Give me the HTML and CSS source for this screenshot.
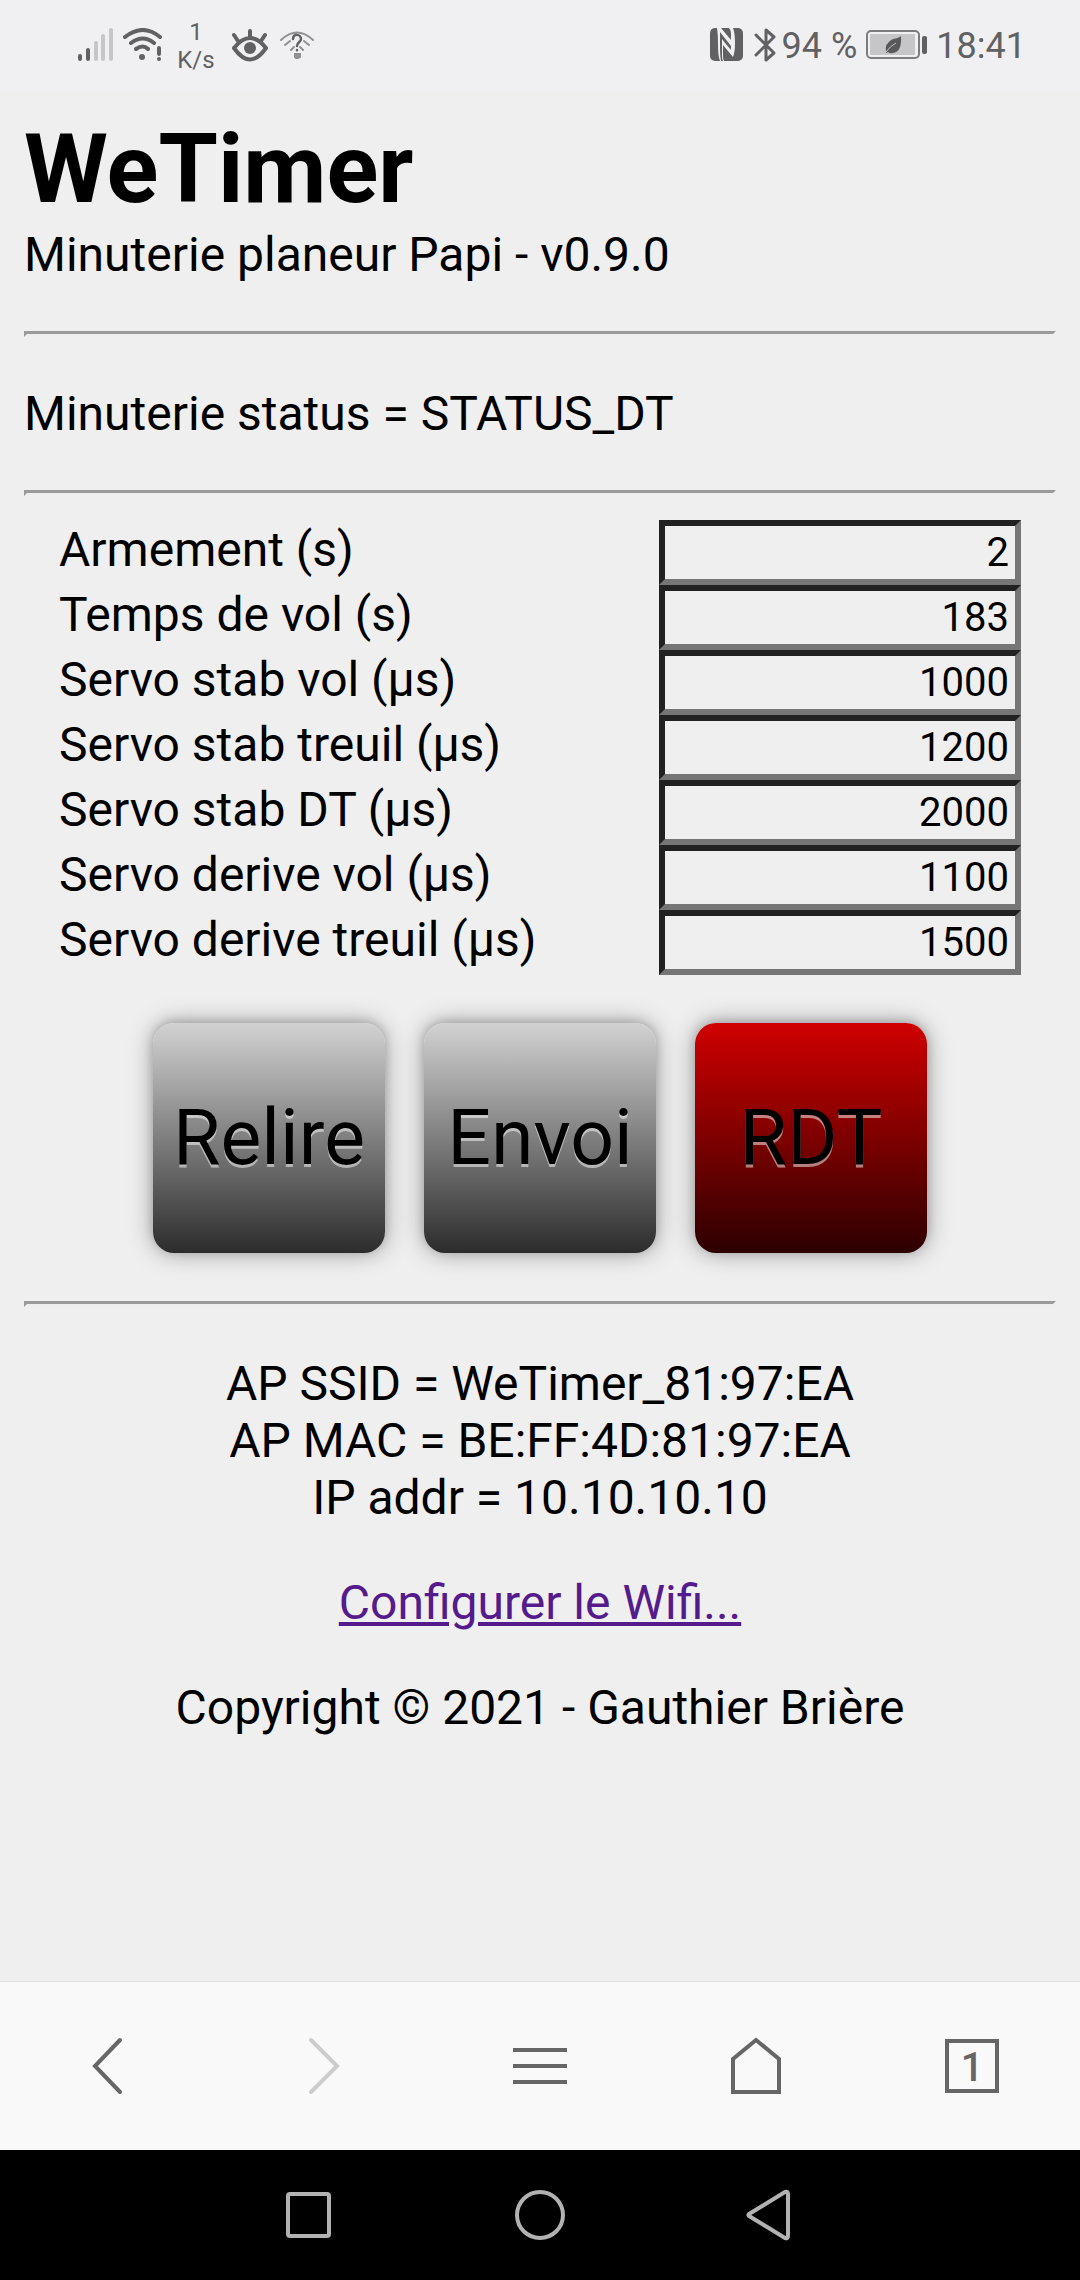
FILE: index.html
```html
<!DOCTYPE html>
<html lang="fr">
<head>
<meta charset="utf-8">
<meta name="viewport" content="width=device-width, initial-scale=1">
<title>WeTimer</title>
<link rel="stylesheet" href="styles.css">
</head>
<body>
<div class="status-bar">
  <div class="status-left">
    <svg width="36" height="34" viewBox="0 0 36 34" stroke-width="4" stroke-linecap="round" stroke="#616163"><path d="M2 28v3M10 22v9"/><path stroke="#c6c6c8" d="M18 15v16M25 8v23M33 2v29"/></svg>
    <svg class="icon-wifi" width="40" height="34" viewBox="0 0 40 34" fill="none" stroke="#616163" stroke-width="4" stroke-linecap="round"><path d="M2 9Q20-5 37 9M8 15Q20 6 31 15M13 21Q20 16 25 21M36 20v6"/><circle cx="19" cy="29" r="3" fill="#616163" stroke="none"/><circle cx="36" cy="31" r="2" fill="#616163" stroke="none"/></svg>
    <div class="net-speed"><span>1</span><span>K/s</span></div>
    <svg class="icon-eye" width="36" height="34" viewBox="0 0 36 34" fill="none" stroke="#616163" stroke-width="4" stroke-linecap="round"><path d="M2 20Q18 0 34 20Q18 43 2 20ZM18 3v6M2 7l4 6M33 7l-4 6" stroke-linejoin="round"/><circle cx="18" cy="20" r="6" fill="#616163" stroke="none"/></svg>
    <svg class="icon-hotspot" width="34" height="34" viewBox="0 0 34 34" fill="none" stroke="#919193" stroke-width="2" stroke-linecap="round"><path d="M1 12Q17-3 33 12M5 17l5-4M29 17l-5-4M11 22l3-3M23 22l-3-3"/><path stroke="#616163" stroke-width="2.5" d="M13 11C13 5 21 6 21 11C21 14 17 14 17 18M17 22v.2"/><path fill="#919193" d="M15 26h5v3l-2 1h-2l-1-1z"/></svg>
  </div>
  <div class="status-right">
    <svg width="33" height="34" viewBox="0 0 33 34"><rect width="33" height="33" rx="5" fill="#616163"/><path fill="#f0f0f2" d="M7 0H11L21 12V5Q21 2 19 0H23Q25 5 25 16Q25 24 23 29L13 17V28Q13 31 14 33H10Q8 28 8 17Q8 6 7 0Z"/><path fill="#616163" d="M10 4L21 18V22L15 15L12 11V28Q12 31 13 33H11Q10 28 10 17Z"/></svg>
    <svg class="icon-bt" width="22" height="36" viewBox="0 0 22 36" fill="none" stroke="#616163" stroke-width="3" stroke-linecap="round" stroke-linejoin="round"><path d="M2 8L20 26L12 33V3L20 10L2 28"/></svg>
    <span class="battery-level">94 %</span>
    <svg class="icon-battery" width="61" height="30" viewBox="0 0 61 30"><rect x="1" y="1" width="52" height="27" rx="4" fill="none" stroke="#7c7c7e" stroke-width="2"/><rect x="4" y="4" width="45" height="21" rx="1" fill="#c6c6c8"/><path d="M35 6Q36 22 27 23Q24 24 22 22L20 23Q18 13 27 9Q33 8 35 6Z" fill="#59595b"/><path d="M20 22Q24 16 30 13" stroke="#c6c6c8" fill="none"/><rect x="56" y="6" width="5" height="18" rx="2" fill="#616163"/></svg>
    <span class="clock">18:41</span>
  </div>
</div>

<main class="page">
  <h1>WeTimer</h1>
  <p>Minuterie planeur Papi - v0.9.0</p>
  <hr>
  <p>Minuterie status = STATUS_DT</p>
  <hr>
  <form class="settings">
    <div class="fields">
      <div class="field"><label for="arm">Armement (s)</label><input id="arm" type="text" inputmode="numeric" value="2"></div>
      <div class="field"><label for="vol">Temps de vol (s)</label><input id="vol" type="text" inputmode="numeric" value="183"></div>
      <div class="field"><label for="stab-vol">Servo stab vol (µs)</label><input id="stab-vol" type="text" inputmode="numeric" value="1000"></div>
      <div class="field"><label for="stab-treuil">Servo stab treuil (µs)</label><input id="stab-treuil" type="text" inputmode="numeric" value="1200"></div>
      <div class="field"><label for="stab-dt">Servo stab DT (µs)</label><input id="stab-dt" type="text" inputmode="numeric" value="2000"></div>
      <div class="field"><label for="derive-vol">Servo derive vol (µs)</label><input id="derive-vol" type="text" inputmode="numeric" value="1100"></div>
      <div class="field"><label for="derive-treuil">Servo derive treuil (µs)</label><input id="derive-treuil" type="text" inputmode="numeric" value="1500"></div>
    </div>
    <div class="actions">
      <button class="action" type="button">Relire</button>
      <button class="action" type="button">Envoi</button>
      <button class="action action-red" type="button">RDT</button>
    </div>
  </form>
  <hr>
  <footer class="info">
    <p>AP SSID = WeTimer_81:97:EA<br>AP MAC = BE:FF:4D:81:97:EA<br>IP addr = 10.10.10.10</p>
    <p><a href="#wifi">Configurer le Wifi...</a></p>
    <p>Copyright © 2021 - Gauthier Brière</p>
  </footer>
</main>

<nav class="browser-bar">
  <button type="button" aria-label="Retour"><svg width="56" height="58" viewBox="0 0 56 58"><path d="M40 3L15 29L40 55" stroke-linecap="round"/></svg></button>
  <button class="disabled" type="button" aria-label="Suivant"><svg width="56" height="58" viewBox="0 0 56 58"><path d="M15 3L41 29L15 55" stroke-linecap="round"/></svg></button>
  <button type="button" aria-label="Menu"><svg width="56" height="58" viewBox="0 0 56 58"><path d="M1 13H55M1 29H55M1 45H55"/></svg></button>
  <button type="button" aria-label="Accueil"><svg width="56" height="58" viewBox="0 0 56 58"><path d="M5 55V22L28 3L51 22V55Z"/></svg></button>
  <button type="button" aria-label="Onglets"><span class="tab-count">1</span></button>
</nav>
<nav class="system-bar">
  <button type="button" aria-label="Applications"><svg width="52" height="52" viewBox="0 0 52 52"><rect x="5" y="5" width="41" height="42" rx="2"/></svg></button>
  <button type="button" aria-label="Écran d'accueil"><svg width="52" height="52" viewBox="0 0 52 52"><circle cx="26" cy="26" r="23"/></svg></button>
  <button type="button" aria-label="Précédent"><svg width="52" height="52" viewBox="0 0 52 52"><path d="M4 25Q3 26 4 27L40 49Q43 50 43 47V5Q43 2 40 3Z" stroke-linejoin="round"/></svg></button>
</nav>
</body>
</html>
```
FILE: styles.css
```css
* { box-sizing: border-box; }

body {
  margin: 0;
  min-height: 100vh;
  display: flex;
  flex-direction: column;
  background: #efefef;
  color: #000;
  font-family: Roboto, "Noto Sans", sans-serif;
  font-size: 48px;
  line-height: 57px;
}

button { font-family: inherit; border: 0; padding: 0; }
svg { display: block; flex: none; }

/* Phone status bar */
.status-bar {
  height: 90px;
  padding: 0 54px 0 78px;
  display: flex;
  justify-content: space-between;
  align-items: center;
  background: #f0f0f2;
  color: #616163;
  font-size: 36px;
}
.status-left, .status-right { display: flex; align-items: center; }
.icon-wifi { margin-left: 9px; }
.net-speed {
  display: flex;
  flex-direction: column;
  width: 40px;
  margin: 2px 16px 0 13px;
  align-items: center;
  font-size: 24px;
  line-height: 28px;
}
.icon-hotspot { margin-left: 12px; }
.icon-bt { margin-left: 11px; }
.battery-level, .clock { padding-top: 3px; white-space: nowrap; }
.battery-level { margin-left: 6px; }
.icon-battery { margin-left: 9px; }
.clock { margin-left: 9px; }

/* Timer page */
.page { flex: 1; padding: 24px 24px 48px; }
h1 { margin: 0 0 2px; font-size: 96px; line-height: 110px; font-weight: 700; }
p { margin: 0 0 48px; }
hr {
  margin: 48px 0;
  height: 6px;
  border: 3px solid;
  border-color: #9a9a9a #eee #eee #9a9a9a;
}
.fields { margin-top: -24px; padding: 0 35px; }
.field { display: flex; justify-content: space-between; align-items: center; height: 65px; }
.field label { padding-bottom: 6px; }
.field input {
  width: 362px;
  height: 65px;
  padding: 3px 6px;
  border: 6px solid;
  border-color: #212121 #767676 #767676 #212121;
  border-radius: 0;
  background: #efefef;
  color: #000;
  font-family: inherit;
  font-size: 40px;
  text-align: right;
}
.actions { display: flex; justify-content: center; gap: 39px; margin-top: 48px; }
.action {
  width: 232px;
  height: 230px;
  border-radius: 21px;
  background: linear-gradient(#d2d2d2, #2c2c2c);
  box-shadow: 0 0 24px rgba(0, 0, 0, 0.35), 0 -2px 10px rgba(0, 0, 0, 0.15);
  color: #000;
  font-size: 77px;
  text-shadow: 0 3px rgba(255, 255, 255, 0.5);
}
.action-red { background: linear-gradient(#d00000, #2c0000); }
.info { text-align: center; }
.info a { color: #551a8b; }

/* Browser toolbar */
.browser-bar {
  display: grid;
  grid-template-columns: repeat(5, 1fr);
  height: 169px;
  border-top: 1px solid #e0e0e0;
  background: #f9f9f9;
}
.browser-bar button {
  display: flex;
  align-items: center;
  justify-content: center;
  background: none;
  color: #666;
}
.browser-bar .disabled { color: #ccc; }
.browser-bar svg { fill: none; stroke: currentColor; stroke-width: 4px; }
.tab-count {
  width: 54px;
  height: 54px;
  border: 4px solid;
  font-size: 40px;
  line-height: 50px;
  font-weight: 500;
}

/* Android navigation */
.system-bar {
  display: grid;
  grid-template-columns: repeat(3, 231px);
  justify-content: center;
  height: 130px;
  background: #000;
}
.system-bar button {
  display: flex;
  align-items: center;
  justify-content: center;
  background: none;
}
.system-bar svg { fill: none; stroke: #b2b2b2; stroke-width: 4px; }
```
